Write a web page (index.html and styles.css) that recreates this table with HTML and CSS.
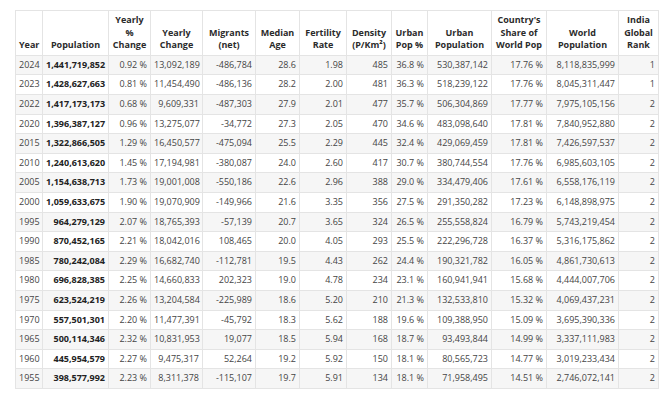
FILE: index.html
```html
<!DOCTYPE html>
<html lang="en">
<head>
<meta charset="utf-8">
<title>India Population</title>
<link rel="stylesheet" href="styles.css">
</head>
<body>
<div class="page">
<table class="pop">
<colgroup>
<col class="c-year"><col class="c-pop"><col class="c-ypc"><col class="c-yc"><col class="c-mig"><col class="c-age"><col class="c-fert"><col class="c-dens"><col class="c-upp"><col class="c-up"><col class="c-share"><col class="c-world"><col class="c-rank">
</colgroup>
<thead>
<tr>
<th>Year</th>
<th>Population</th>
<th>Yearly<br>%<br>Change</th>
<th>Yearly<br>Change</th>
<th>Migrants<br>(net)</th>
<th>Median<br>Age</th>
<th>Fertility<br>Rate</th>
<th>Density<br>(P/Km²)</th>
<th>Urban<br>Pop %</th>
<th>Urban<br>Population</th>
<th>Country's<br>Share of<br>World Pop</th>
<th>World<br>Population</th>
<th>India<br>Global<br>Rank</th>
</tr>
</thead>
<tbody>
<tr><td>2024</td><td class="b">1,441,719,852</td><td>0.92 %</td><td>13,092,189</td><td>-486,784</td><td>28.6</td><td>1.98</td><td>485</td><td>36.8 %</td><td>530,387,142</td><td>17.76 %</td><td>8,118,835,999</td><td>1</td></tr>
<tr><td>2023</td><td class="b">1,428,627,663</td><td>0.81 %</td><td>11,454,490</td><td>-486,136</td><td>28.2</td><td>2.00</td><td>481</td><td>36.3 %</td><td>518,239,122</td><td>17.76 %</td><td>8,045,311,447</td><td>1</td></tr>
<tr><td>2022</td><td class="b">1,417,173,173</td><td>0.68 %</td><td>9,609,331</td><td>-487,303</td><td>27.9</td><td>2.01</td><td>477</td><td>35.7 %</td><td>506,304,869</td><td>17.77 %</td><td>7,975,105,156</td><td>2</td></tr>
<tr><td>2020</td><td class="b">1,396,387,127</td><td>0.96 %</td><td>13,275,077</td><td>-34,772</td><td>27.3</td><td>2.05</td><td>470</td><td>34.6 %</td><td>483,098,640</td><td>17.81 %</td><td>7,840,952,880</td><td>2</td></tr>
<tr><td>2015</td><td class="b">1,322,866,505</td><td>1.29 %</td><td>16,450,577</td><td>-475,094</td><td>25.5</td><td>2.29</td><td>445</td><td>32.4 %</td><td>429,069,459</td><td>17.81 %</td><td>7,426,597,537</td><td>2</td></tr>
<tr><td>2010</td><td class="b">1,240,613,620</td><td>1.45 %</td><td>17,194,981</td><td>-380,087</td><td>24.0</td><td>2.60</td><td>417</td><td>30.7 %</td><td>380,744,554</td><td>17.76 %</td><td>6,985,603,105</td><td>2</td></tr>
<tr><td>2005</td><td class="b">1,154,638,713</td><td>1.73 %</td><td>19,001,008</td><td>-550,186</td><td>22.6</td><td>2.96</td><td>388</td><td>29.0 %</td><td>334,479,406</td><td>17.61 %</td><td>6,558,176,119</td><td>2</td></tr>
<tr><td>2000</td><td class="b">1,059,633,675</td><td>1.90 %</td><td>19,070,909</td><td>-149,966</td><td>21.6</td><td>3.35</td><td>356</td><td>27.5 %</td><td>291,350,282</td><td>17.23 %</td><td>6,148,898,975</td><td>2</td></tr>
<tr><td>1995</td><td class="b">964,279,129</td><td>2.07 %</td><td>18,765,393</td><td>-57,139</td><td>20.7</td><td>3.65</td><td>324</td><td>26.5 %</td><td>255,558,824</td><td>16.79 %</td><td>5,743,219,454</td><td>2</td></tr>
<tr><td>1990</td><td class="b">870,452,165</td><td>2.21 %</td><td>18,042,016</td><td>108,465</td><td>20.0</td><td>4.05</td><td>293</td><td>25.5 %</td><td>222,296,728</td><td>16.37 %</td><td>5,316,175,862</td><td>2</td></tr>
<tr><td>1985</td><td class="b">780,242,084</td><td>2.29 %</td><td>16,682,740</td><td>-112,781</td><td>19.5</td><td>4.43</td><td>262</td><td>24.4 %</td><td>190,321,782</td><td>16.05 %</td><td>4,861,730,613</td><td>2</td></tr>
<tr><td>1980</td><td class="b">696,828,385</td><td>2.25 %</td><td>14,660,833</td><td>202,323</td><td>19.0</td><td>4.78</td><td>234</td><td>23.1 %</td><td>160,941,941</td><td>15.68 %</td><td>4,444,007,706</td><td>2</td></tr>
<tr><td>1975</td><td class="b">623,524,219</td><td>2.26 %</td><td>13,204,584</td><td>-225,989</td><td>18.6</td><td>5.20</td><td>210</td><td>21.3 %</td><td>132,533,810</td><td>15.32 %</td><td>4,069,437,231</td><td>2</td></tr>
<tr><td>1970</td><td class="b">557,501,301</td><td>2.20 %</td><td>11,477,391</td><td>-45,792</td><td>18.3</td><td>5.62</td><td>188</td><td>19.6 %</td><td>109,388,950</td><td>15.09 %</td><td>3,695,390,336</td><td>2</td></tr>
<tr><td>1965</td><td class="b">500,114,346</td><td>2.32 %</td><td>10,831,953</td><td>19,077</td><td>18.5</td><td>5.94</td><td>168</td><td>18.7 %</td><td>93,493,844</td><td>14.99 %</td><td>3,337,111,983</td><td>2</td></tr>
<tr><td>1960</td><td class="b">445,954,579</td><td>2.27 %</td><td>9,475,317</td><td>52,264</td><td>19.2</td><td>5.92</td><td>150</td><td>18.1 %</td><td>80,565,723</td><td>14.77 %</td><td>3,019,233,434</td><td>2</td></tr>
<tr><td>1955</td><td class="b">398,577,992</td><td>2.23 %</td><td>8,311,378</td><td>-115,107</td><td>19.7</td><td>5.91</td><td>134</td><td>18.1 %</td><td>71,958,495</td><td>14.51 %</td><td>2,746,072,141</td><td>2</td></tr>
</tbody>
</table>
</div>
</body>
</html>
```

FILE: styles.css
```css
html, body {
  margin: 0;
  padding: 0;
  background: #ffffff;
}

.page {
  padding: 10px 8px 0 15px;
}

.pop {
  width: 643px;
  table-layout: fixed;
  border-collapse: collapse;
  font-family: "Open Sans", "Noto Sans", sans-serif;
  font-size: 9px;
  line-height: 1.4;
  color: #454545;
}

.c-year { width: 27px; }
.c-pop { width: 66px; }
.c-ypc { width: 42px; }
.c-yc { width: 52px; }
.c-mig { width: 53px; }
.c-age { width: 44px; }
.c-fert { width: 47px; }
.c-dens { width: 45px; }
.c-upp { width: 36px; }
.c-up { width: 64px; }
.c-share { width: 55px; }
.c-world { width: 72px; }
.c-rank { width: 40px; }

.pop th,
.pop td {
  border: 1px solid #e4e4e4;
  padding: 3px 3px;
  white-space: nowrap;
  overflow: hidden;
}

.pop th {
  font-weight: 700;
  color: #2b2b2b;
  text-align: center;
  vertical-align: bottom;
}

.pop td {
  text-align: right;
  vertical-align: middle;
}

.pop td.b {
  font-weight: 700;
  color: #222222;
}

.pop tbody tr:nth-child(odd) td {
  background: #f6f6f6;
}
```
